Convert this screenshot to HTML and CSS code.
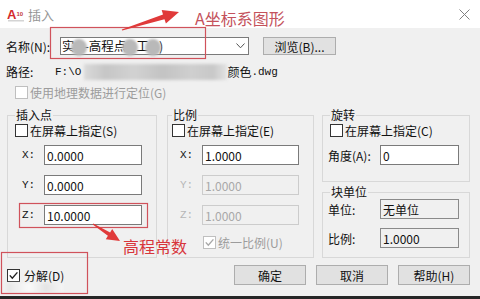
FILE: index.html
```html
<!DOCTYPE html>
<html>
<head>
<meta charset="utf-8">
<title>插入</title>
<link rel="stylesheet" href="styles.css">
</head>
<body>

  <div class="titlebar">
    <svg class="app-icon" width="18" height="15" viewBox="0 0 18 15">
      <text x="0" y="12" class="icon-a">A</text>
      <text x="9.5" y="9" class="icon-num">10</text>
      <rect x="1" y="13" width="16" height="1.5" fill="#d4d4d4"/>
    </svg>
    <span class="title">插入</span>
    <svg class="close" width="11" height="11" viewBox="0 0 11 11">
      <line x1="0.5" y1="0.5" x2="10.5" y2="10.5"/>
      <line x1="10.5" y1="0.5" x2="0.5" y2="10.5"/>
    </svg>
  </div>

  <div class="content">
    <div class="row name-row">
      <span class="name-label">名称(N):</span>
      <div class="combo">
        <span class="combo-text">实<i class="blob"></i>-高程点<i class="blob"></i>工<i class="blob"></i>)</span>
        <svg class="chevron" width="9" height="6" viewBox="0 0 9 6"><polyline points="0.5,0.5 4.5,4.8 8.5,0.5"/></svg>
      </div>
      <button class="btn browse">浏览(B)...</button>
    </div>

    <div class="row path-row">
      <span class="path-label">路径:</span>
      <span class="mono">F:\O</span>
      <span class="path-blur"></span>
      <span>颜色</span><span class="mono">.dwg</span>
    </div>

    <div class="row geo-row">
      <span class="cb cb-off"></span>
      <span class="muted">使用地理数据进行定位(G)</span>
    </div>

    <div class="groups">
      <fieldset class="group g-insert">
        <legend>插入点</legend>
        <div class="row cb-row"><span class="cb"></span>在屏幕上指定(S)</div>
        <div class="row field-row"><span class="axis">X:</span><span class="box">0.0000</span></div>
        <div class="row field-row gap"><span class="axis">Y:</span><span class="box">0.0000</span></div>
        <div class="row field-row gap"><span class="axis">Z:</span><span class="box">10.0000</span></div>
      </fieldset>

      <fieldset class="group g-scale">
        <legend>比例</legend>
        <div class="row cb-row"><span class="cb"></span>在屏幕上指定(E)</div>
        <div class="row field-row"><span class="axis">X:</span><span class="box">1.0000</span></div>
        <div class="row field-row gap"><span class="axis off">Y:</span><span class="box box-off">1.0000</span></div>
        <div class="row field-row gap"><span class="axis off">Z:</span><span class="box box-off">1.0000</span></div>
        <div class="row uniform-row">
          <span class="cb cb-off"><svg width="11" height="11" viewBox="0 0 11 11"><polyline class="tick tick-off" points="1.8,5.4 4.3,8.2 9.4,2.4"/></svg></span>
          <span class="muted">统一比例(U)</span>
        </div>
      </fieldset>

      <div class="side">
        <fieldset class="group g-rotate">
          <legend>旋转</legend>
          <div class="row cb-row"><span class="cb"></span>在屏幕上指定(C)</div>
          <div class="row field-row"><span class="side-label">角度(A):</span><span class="box box-side">0</span></div>
        </fieldset>
        <fieldset class="group g-unit">
          <legend>块单位</legend>
          <div class="row unit-row"><span class="side-label">单位:</span><span class="box box-side box-ro">无单位</span></div>
          <div class="row unit-row gap9"><span class="side-label">比例:</span><span class="box box-side box-ro">1.0000</span></div>
        </fieldset>
      </div>
    </div>

    <div class="row bottom-row">
      <span class="cb cb-explode"><svg width="11" height="11" viewBox="0 0 11 11"><polyline class="tick" points="1.8,5.4 4.3,8.2 9.4,2.4"/></svg></span>
      <span>分解(D)</span>
      <div class="buttons">
        <button class="btn">确定</button>
        <button class="btn">取消</button>
        <button class="btn">帮助(H)</button>
      </div>
    </div>
    <div class="watermark"></div>
  </div>

  <div class="taskbar"></div>

  <!-- red notes drawn over the dialog -->
  <svg class="notes" width="480" height="299" viewBox="0 0 480 299">
    <rect x="50.5" y="27.5" width="155" height="31"/>
    <rect x="19.5" y="203.5" width="128" height="24"/>
    <rect x="1.5" y="252.5" width="86" height="41"/>
    <polygon class="arrow" points="121.8,29.5 163,14.4 161.7,10.1 179,12 165.9,23.5 164.5,19.2 122.2,30.5"/>
    <polygon class="arrow" points="93.3,223.6 110.1,232.4 112.2,229 120,241 105.8,239.2 107.9,235.8 92.7,224.4"/>
  </svg>
  <div class="note note-top">A坐标系图形</div>
  <div class="note note-z">高程常数</div>

</body>
</html>
```

FILE: styles.css
```css
* {
  margin: 0;
  padding: 0;
  box-sizing: border-box;
}

html, body {
  width: 480px;
  height: 299px;
  overflow: hidden;
}

body {
  position: relative;
  display: flex;
  flex-direction: column;
  background: #f0f0f0;
  font-family: "Noto Sans CJK SC", sans-serif;
  font-size: 12px;
  color: #111;
}

.titlebar {
  height: 28px;
  flex: none;
  background: #fff;
  display: flex;
  align-items: center;
  padding: 0 10px 0 7px;
}

.icon-a {
  font-family: "Liberation Sans", sans-serif;
  font-weight: bold;
  font-size: 13px;
  fill: #d42a2a;
}

.icon-num {
  font-family: "Liberation Sans", sans-serif;
  font-weight: bold;
  font-size: 6px;
  fill: #c23a3a;
}

.title {
  margin-left: 3px;
  color: #969696;
  font-size: 13px;
}

.close {
  margin-left: auto;
  stroke: #808080;
  stroke-width: 1;
}

.content {
  flex: 1;
  padding: 0 10px 0 6px;
}

.row {
  display: flex;
  align-items: center;
}

/* name row */
.name-row {
  margin-top: 9px;
  height: 18px;
}

.name-label {
  width: 54px;
}

.combo {
  width: 189px;
  height: 18px;
  background: #fff;
  border: 1px solid #7a7a7a;
  display: flex;
  align-items: center;
  padding-left: 1px;
  white-space: nowrap;
}

.combo-text {
  font-size: 12.5px;
}

.blob {
  display: inline-block;
  width: 16px;
  height: 17px;
  border-radius: 50%;
  background: #b9b9b9;
  filter: blur(1px);
  vertical-align: middle;
  margin: 0 -2px 0 -4px;
}

.chevron {
  margin-left: auto;
  margin-right: 3px;
  fill: none;
  stroke: #555;
  stroke-width: 1;
}

.btn {
  font: inherit;
  color: #111;
  background: #e1e1e1;
  border: 1px solid #adadad;
  width: 72px;
  height: 20px;
}

.browse {
  margin-left: 14px;
  width: 73px;
  height: 18px;
}

/* path row */
.path-row {
  margin-top: 8px;
  height: 17px;
}

.path-label {
  width: 49px;
}

.mono {
  font-family: "Liberation Mono", monospace;
  font-size: 11px;
}

.path-blur {
  width: 143px;
  height: 16px;
  margin: 0 0 0 3px;
  background: linear-gradient(90deg, #dadada, #c6c6c6 15%, #d2d2d2 35%, #c3c3c3 55%, #cfcfcf 75%, #c8c8c8 90%, #e2e2e2);
  filter: blur(1.5px);
}

/* checkboxes */
.geo-row {
  margin-top: 4px;
  height: 16px;
  padding-left: 9px;
}

.cb {
  width: 13px;
  height: 13px;
  flex: none;
  border: 1px solid #333;
  background: #fff;
  margin-right: 2px;
  display: flex;
  align-items: center;
  justify-content: center;
}

.cb-off {
  border-color: #bfbfbf;
}

.tick {
  fill: none;
  stroke: #222;
  stroke-width: 1.4;
}

.tick-off {
  stroke: #a8a8a8;
}

.muted {
  color: #9c9c9c;
}

/* group boxes */
.groups {
  display: flex;
  height: 150px;
  margin-top: 8px;
  margin-left: 1px;
}

.group {
  margin: 0;
  border: 1px solid #d8d8d8;
  padding: 0 0 0 7px;
  min-width: 0;
}

.group legend {
  padding: 0 1px;
  line-height: 14px;
}

.g-insert {
  width: 150px;
}

.g-scale {
  width: 147px;
  margin-left: 10px;
  padding-left: 4px;
}

.side {
  width: 148px;
  margin-left: 8px;
  display: flex;
  flex-direction: column;
  gap: 3px;
}

.g-rotate {
  height: 74px;
}

.g-unit {
  flex: 1;
}

.cb-row {
  margin-top: 1px;
  height: 14px;
}

.field-row {
  margin-top: 8px;
  height: 20px;
}

.field-row.gap {
  margin-top: 10px;
}

.axis {
  width: 22px;
  margin-left: 7px;
  font-family: "Liberation Mono", monospace;
  font-size: 11px;
}

.g-scale .axis {
  margin-left: 8px;
}

.axis.off {
  color: #b6b6b6;
}

.box {
  width: 98px;
  height: 20px;
  background: #fff;
  border: 1px solid #7a7a7a;
  padding-left: 2px;
  display: flex;
  align-items: center;
}

.g-scale .box {
  width: 97px;
}

.box-off {
  background: #f0f0f0;
  border-color: #cccccc;
  color: #a8a8a8;
}

.uniform-row {
  margin-top: 10px;
  height: 14px;
  padding-left: 31px;
}

.side-label {
  width: 52px;
  margin-left: -2px;
}

.box.box-side {
  width: 79px;
}

.box-ro {
  background: #f0f0f0;
  border-color: #8a8a8a;
}

.unit-row {
  height: 20px;
}

.unit-row.gap9 {
  margin-top: 9px;
}

/* bottom row */
.bottom-row {
  margin-top: 7px;
  height: 20px;
}

.cb-explode {
  margin-left: 1px;
  margin-right: 4px;
}

.buttons {
  margin-left: auto;
  display: flex;
  gap: 10px;
}

.watermark {
  margin: -2px 0 0 1px;
  width: 56px;
  height: 9px;
  background: linear-gradient(90deg, #e6e6e6, #fafafa 40%, #e4e4e4 70%, #f6f6f6);
  filter: blur(1.5px);
}

.taskbar {
  height: 3px;
  flex: none;
  background: #262626;
}

/* annotations */
.notes {
  position: absolute;
  left: 0;
  top: 0;
  pointer-events: none;
}

.notes rect {
  fill: none;
  stroke: #d0525b;
  stroke-width: 1.2;
}

.notes .arrow {
  fill: #e03a3a;
}

.note {
  position: absolute;
  font-size: 16px;
  line-height: 20px;
  white-space: nowrap;
}

.note-top {
  left: 195px;
  top: 8px;
  color: #c4525c;
}

.note-z {
  left: 123px;
  top: 236px;
  color: #d8363b;
}
```
